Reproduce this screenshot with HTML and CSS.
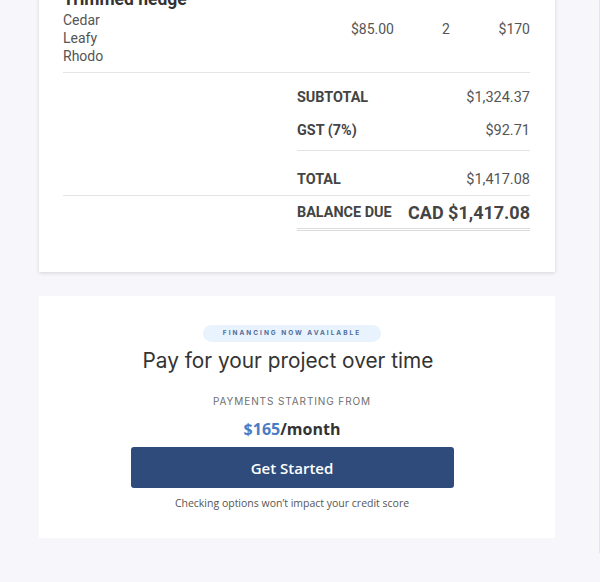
FILE: index.html
```html
<!DOCTYPE html>
<html>
<head>
<meta charset="utf-8">
<link rel="stylesheet" href="styles.css">
</head>
<body>
<div class="page">
  <div class="invoice">
    <div class="item">
      <div class="desc">
        <div class="item-title">Trimmed hedge</div>
        <div class="item-line">Cedar</div>
        <div class="item-line">Leafy</div>
        <div class="item-line">Rhodo</div>
      </div>
      <div class="num price">$85.00</div>
      <div class="num qty">2</div>
      <div class="num amount">$170</div>
    </div>
    <div class="totals">
      <div class="trow"><span class="tlabel">Subtotal</span><span class="tval">$1,324.37</span></div>
      <div class="trow"><span class="tlabel">GST (7%)</span><span class="tval">$92.71</span></div>
    </div>
    <div class="total-section">
      <div class="trow total"><span class="tlabel">Total</span><span class="tval">$1,417.08</span></div>
    </div>
    <div class="balance">
      <span class="tlabel">Balance Due</span><span class="bval">CAD $1,417.08</span>
    </div>
  </div>

  <div class="finance">
    <div class="badge">FINANCING NOW AVAILABLE</div>
    <h2 class="fin-title">Pay for your project over time</h2>
    <div class="fin-sub">PAYMENTS STARTING FROM</div>
    <div class="fin-price"><span class="fin-amt">$165</span>/month</div>
    <button class="fin-btn">Get Started</button>
    <div class="fin-note">Checking options won’t impact your credit score</div>
  </div>
</div>
</body>
</html>
```

FILE: styles.css
```css
html, body {
  margin: 0;
  padding: 0;
  background: #f7f7fb;
  overflow: hidden;
}
.page {
  width: 600px;
  height: 582px;
  box-sizing: border-box;
  padding-left: 39px;
  border-right: 1px solid #e4e4ea;
}
.invoice {
  width: 516px;
  box-sizing: border-box;
  margin-top: -29px;
  padding: 17px 25px 41px 24px;
  background: #fff;
  box-shadow: 0 1px 4px rgba(0, 0, 0, 0.14);
  font-family: Roboto, "Liberation Sans", sans-serif;
  color: #555;
}
.item {
  display: grid;
  grid-template-columns: 1fr 100px 104px 32px;
  border-bottom: 1px solid #e4e4e4;
  padding-bottom: 7px;
}
.item-title {
  font-size: 17.5px;
  font-weight: 700;
  line-height: 23px;
  color: #333;
}
.item-line {
  font-size: 14px;
  line-height: 18px;
}
.num {
  font-size: 14px;
  line-height: 18px;
  padding-top: 32px;
  white-space: nowrap;
}
.price { text-align: right; }
.qty { text-align: center; }
.amount { text-align: right; direction: rtl; }
.totals {
  margin-left: 234px;
  padding-top: 8px;
  padding-bottom: 3px;
  border-bottom: 1px solid #e4e4e4;
}
.trow {
  display: flex;
  justify-content: space-between;
  align-items: center;
  height: 33px;
  font-size: 14.5px;
}
.tlabel {
  font-weight: 700;
  color: #444;
  text-transform: uppercase;
  font-size: 14.4px;
}
.tval {
  color: #555;
}
.total-section {
  padding-top: 12px;
  border-bottom: 1px solid #e4e4e4;
}
.trow.total {
  margin-left: 234px;
  height: 32px;
}
.balance {
  margin-left: 234px;
  height: 32px;
  display: flex;
  justify-content: space-between;
  align-items: center;
  border-bottom: 3px double #dcdcdc;
}
.bval {
  font-size: 18px;
  font-weight: 700;
  color: #444;
}

.finance {
  width: 516px;
  box-sizing: border-box;
  margin-top: 24px;
  padding: 29px 10px 28px 0;
  background: #fff;
  display: flex;
  flex-direction: column;
  align-items: center;
}
.badge {
  width: 178px;
  height: 17px;
  line-height: 17px;
  border-radius: 9px;
  background: #e9f3fd;
  color: #4f6d9c;
  font-family: Inter, "Liberation Sans", sans-serif;
  font-size: 6.5px;
  font-weight: 700;
  letter-spacing: 2px;
  text-align: center;
}
.fin-title {
  margin: 6px 0 0;
  padding-right: 8px;
  font-family: Inter, "Liberation Sans", sans-serif;
  font-weight: 400;
  font-size: 20.8px;
  line-height: 26px;
  color: #333;
}
.fin-sub {
  margin-top: 20px;
  font-family: Inter, "Liberation Sans", sans-serif;
  font-size: 10px;
  line-height: 14px;
  letter-spacing: 0.9px;
  color: #6f6f6f;
}
.fin-price {
  margin-top: 10px;
  font-family: "Open Sans", "Liberation Sans", sans-serif;
  font-size: 16px;
  font-weight: 700;
  line-height: 22px;
  color: #333;
}
.fin-amt {
  color: #4a7cc4;
}
.fin-btn {
  margin-top: 7px;
  width: 323px;
  height: 41px;
  border: 0;
  border-radius: 3px;
  background: #2e4b7c;
  color: #fff;
  font-family: "Open Sans", "Liberation Sans", sans-serif;
  font-size: 15px;
  font-weight: 600;
  padding: 0;
}
.fin-note {
  margin-top: 8px;
  font-family: "Open Sans", "Liberation Sans", sans-serif;
  font-size: 10.5px;
  line-height: 14px;
  color: #555;
}
```
